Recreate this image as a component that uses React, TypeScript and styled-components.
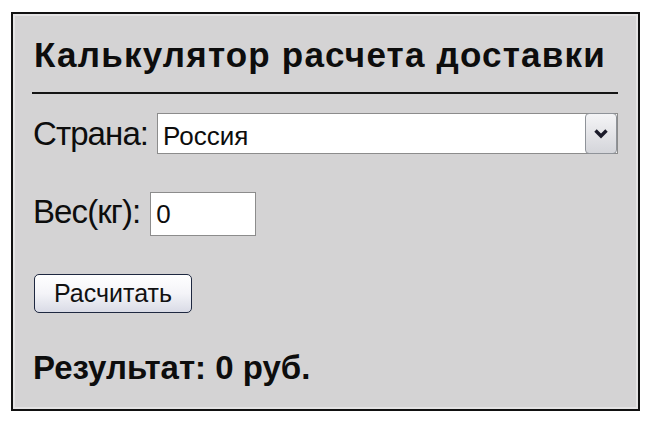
import React from "react";
import styled, { createGlobalStyle } from "styled-components";

const Global = createGlobalStyle`
  html, body { margin: 0; padding: 0; background: #ffffff; }
  body { font-family: "Liberation Sans", Arial, sans-serif; color: #0d0d0d; }
  * { box-sizing: border-box; }
`;

const Page = styled.div`
  width: 650px;
  height: 426px;
  padding: 12px 0 0 11px;
`;

const Panel = styled.div`
  width: 629px;
  height: 399px;
  background: #d4d3d4;
  border: 2px solid #111111;
  box-shadow: inset 0 0 0 2px #e4e3e4;
  padding: 23px 20px 0 19px;
  display: flex;
  flex-direction: column;
`;

const Title = styled.h1`
  margin: 0;
  font-size: 35px;
  line-height: 35px;
  font-weight: 700;
  text-align: center;
  letter-spacing: 1.2px;
  white-space: nowrap;
  padding-right: 10px;
`;

const Rule = styled.div`
  height: 2px;
  background: #141414;
  margin-top: 20px;
`;

const Row = styled.div<{ $top: number }>`
  display: flex;
  align-items: baseline;
  margin-top: ${(p) => p.$top}px;
`;

const Label = styled.span`
  font-size: 33px;
  line-height: 33px;
  letter-spacing: -0.9px;
  margin-left: 1px;
  white-space: pre;
`;

const SelectBox = styled.div`
  flex: 1;
  height: 41px;
  margin-left: 9px;
  background: #ffffff;
  border: 1px solid #8c8c8c;
  display: flex;
  align-items: stretch;
`;

const FieldText = styled.span`
  flex: 1;
  font-size: 26px;
  line-height: 26px;
  padding: 9px 0 0 5px;
`;

const ArrowButton = styled.div`
  width: 32px;
  margin: -1px 0 -1px 0;
  border: 1px solid #8f9399;
  border-radius: 4px;
  background: linear-gradient(#f4f4f6, #d4d5da);
  display: flex;
  align-items: center;
  justify-content: center;
`;

const InputBox = styled.div`
  width: 106px;
  height: 44px;
  margin-left: 10px;
  background: #ffffff;
  border: 1px solid #8c8c8c;
  display: flex;
`;

const InputText = styled.span`
  font-size: 26px;
  line-height: 26px;
  padding: 8px 0 0 5px;
`;

const Button = styled.button`
  width: 158px;
  height: 39px;
  margin-left: 2px;
  border: 1px solid #1e2840;
  border-radius: 5px;
  background: linear-gradient(#ffffff 0%, #f4f4f8 50%, #d9dbe6 100%);
  font-family: "Liberation Sans", Arial, sans-serif;
  font-size: 25px;
  color: #111;
  padding: 0;
  display: flex;
  align-items: center;
  justify-content: center;
`;

const Result = styled.div`
  margin-top: 38px;
  margin-left: 1px;
  font-size: 33px;
  line-height: 33px;
  font-weight: 700;
`;

export default function App() {
  return (
    <Page>
      <Global />
      <Panel>
        <Title>Калькулятор расчета доставки</Title>
        <Rule />
        <Row $top={19}>
          <Label>Страна:</Label>
          <SelectBox>
            <FieldText>Россия</FieldText>
            <ArrowButton>
              <svg width="16" height="11" viewBox="0 0 16 11">
                <path d="M2.5 2.5 L8 8 L13.5 2.5" fill="none" stroke="#1b1b2a" strokeWidth="3.4" />
              </svg>
            </ArrowButton>
          </SelectBox>
        </Row>
        <Row $top={38}>
          <Label>Вес(кг):</Label>
          <InputBox>
            <InputText>0</InputText>
          </InputBox>
        </Row>
        <Row $top={38}>
          <Button>Расчитать</Button>
        </Row>
        <Result>Результат: 0 руб.</Result>
      </Panel>
    </Page>
  );
}
